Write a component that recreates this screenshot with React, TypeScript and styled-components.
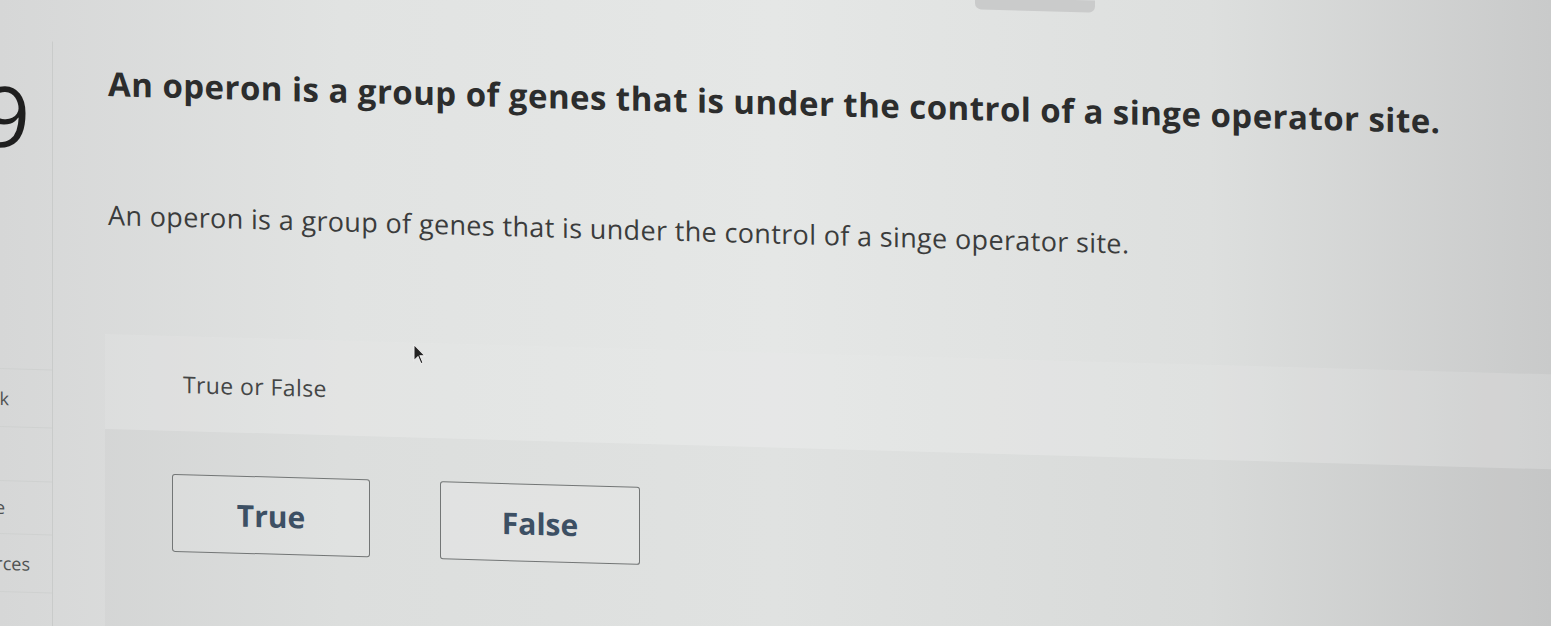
import React from 'react';
import styled, {createGlobalStyle} from 'styled-components';

// the reference is a photo of a screen, a little sheared: skew the page to match
const SHEAR = 1.6;

const GlobalStyle = createGlobalStyle`
  html, body {
    margin: 0;
    padding: 0;
    height: 100%;
  }
  body {
    font-family: 'Open Sans', 'Lato', sans-serif;
    background: linear-gradient(90deg, #d6d7d7 0%, #e1e3e2 22%, #e5e7e6 50%, #dddfde 78%, #c9caca 100%);
    overflow: hidden;
    -webkit-font-smoothing: antialiased;
  }
`;

const Page = styled.div`
  position: relative;
  display: flex;
  width: 1551px;
  height: 626px;
  transform: skewY(${SHEAR}deg);
  transform-origin: 0 0;
`;

const TopTab = styled.div`
  position: absolute;
  top: -30px;
  left: 975px;
  width: 120px;
  height: 12px;
  border-radius: 0 0 6px 6px;
  background: #cacbcb;
`;

const Sidebar = styled.aside`
  flex: 0 0 52px;
  display: flex;
  flex-direction: column;
  border-right: 1px solid #c9cbca;
  margin-top: 40px;
  overflow: hidden;
`;

const QuestionNumber = styled.div`
  margin: 33px 0 0 -18px;
  font-size: 84px;
  line-height: 84px;
  font-weight: 400;
  color: #1f1f1f;
`;

const NavList = styled.nav`
  margin-top: 211px;
  display: flex;
  flex-direction: column;
`;

const NavItem = styled.div<{ h: number; end: number }>`
  height: ${p => p.h}px;
  display: flex;
  align-items: center;
  justify-content: flex-end;
  padding-right: ${p => 52 - p.end}px;
  border-top: 1px solid #cfd1d0;
  font-size: 18px;
  color: #4f5252;
  white-space: nowrap;
  &:last-child {
    border-bottom: 1px solid #cfd1d0;
  }
`;

const Main = styled.main`
  flex: 1;
  display: flex;
  flex-direction: column;
  padding-left: 52px;
`;

const Title = styled.h1`
  margin: 59px 0 0 3px;
  font-size: 33px;
  font-weight: 700;
  line-height: 44px;
  letter-spacing: 0.45px;
  color: #2c2d2d;
  white-space: nowrap;
`;

const Prompt = styled.p`
  margin: 91px 0 0 3px;
  font-size: 27px;
  line-height: 36px;
  font-weight: 400;
  letter-spacing: 0.35px;
  color: #3b3c3c;
  white-space: nowrap;
`;

const Panel = styled.section`
  margin-top: 101px;
  flex: 1;
  display: flex;
  flex-direction: column;
  background: rgba(0, 0, 0, 0.02);
`;

const PanelHead = styled.div`
  height: 95px;
  display: flex;
  align-items: center;
  padding-left: 78px;
  background: rgba(255, 255, 255, 0.2);
  font-size: 23px;
  letter-spacing: 0.4px;
  color: #444646;
`;

const Choices = styled.div`
  display: flex;
  gap: 70px;
  padding: 43px 0 0 67px;
`;

const Choice = styled.button<{ w: number }>`
  width: ${p => p.w}px;
  height: 78px;
  border: 1.5px solid #737676;
  border-radius: 3px;
  background: rgba(255, 255, 255, 0.12);
  font-family: 'Open Sans', 'Lato', sans-serif;
  font-size: 30px;
  font-weight: 700;
  color: #3d5064;
  cursor: pointer;
`;

const Cursor = styled.svg`
  position: absolute;
  left: 413px;
  top: 332px;
`;

export default function App() {
  return (
    <Page>
      <GlobalStyle/>
      <TopTab/>
      <Sidebar>
        <QuestionNumber>9</QuestionNumber>
        <NavList>
          <NavItem h={57} end={9}>Ebook</NavItem>
          <NavItem h={53} end={-2}>Print</NavItem>
          <NavItem h={52} end={5}>Guide</NavItem>
          <NavItem h={57} end={30}>Resources</NavItem>
        </NavList>
      </Sidebar>
      <Main>
        <Title>An operon is a group of genes that is under the control of a singe operator site.</Title>
        <Prompt>An operon is a group of genes that is under the control of a singe operator site.</Prompt>
        <Panel>
          <PanelHead>True or False</PanelHead>
          <Choices>
            <Choice w={198}>True</Choice>
            <Choice w={200}>False</Choice>
          </Choices>
        </Panel>
      </Main>
      <Cursor width="14" height="22" viewBox="0 0 14 22">
        <path d="M1 1 L1 17 L5 13 L8 20 L10 19 L7 12 L12 12 Z" fill="#222" stroke="#eee" strokeWidth="1"/>
      </Cursor>
    </Page>
  );
}
